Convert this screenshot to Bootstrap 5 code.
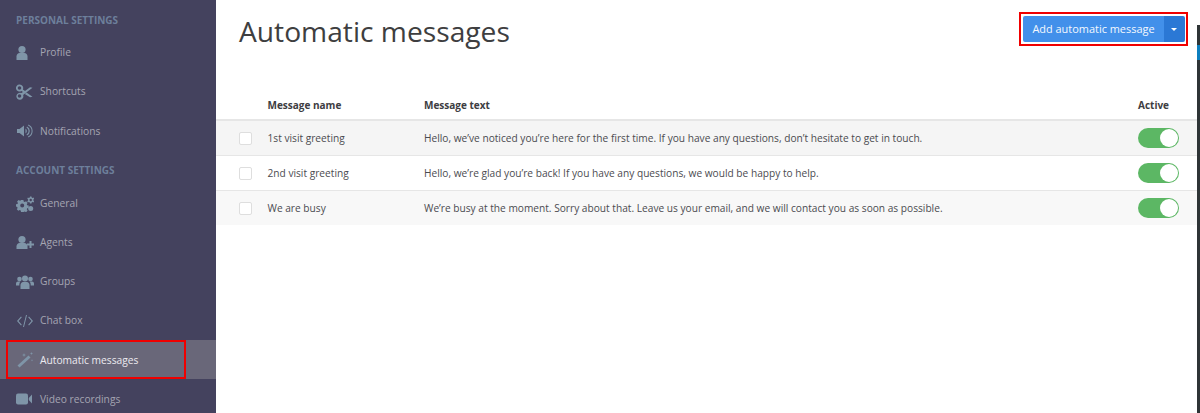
<!DOCTYPE html>
<html lang="en">
<head>
<meta charset="utf-8">
<title>Automatic messages</title>
<link href="https://cdn.jsdelivr.net/npm/bootstrap@5.3.0/dist/css/bootstrap.min.css" rel="stylesheet">
<style>
html,body{height:413px;overflow:hidden;background:#fff}
body{font-family:"Open Sans","Liberation Sans",sans-serif;color:#444;font-size:11px}
.shell{height:413px;overflow:hidden}
.side{width:216px;flex:none;background:#44425e;height:413px;overflow:hidden;padding-top:13px}
.side-head{font-size:10px;font-weight:700;color:#6d7f9b;padding-left:16px;line-height:15px;margin:0}
.side-head.later{margin-top:12.500px}
.side-item{display:flex;align-items:center;height:39.100px;color:#a5a5b2;font-size:10.25px;padding-left:16px;text-decoration:none;position:relative;padding-top:1px}
.side-item svg{width:18px;height:16px;margin-right:6px;flex:none;fill:#7f95a8}
.side-list{margin-top:5px}
.side-list.tight{margin-top:6px}
.side-item.on{background:#696779;color:#eceaf0}
.side-item.on::after{content:"";position:absolute;left:6px;top:0;width:180px;height:39px;border:2px solid #f00000}
.body-pane{flex:1;min-width:0;position:relative}
.top{padding:12px 12px 0 23px;height:96px}
.page-title{font-size:28.2px;font-weight:400;color:#3e3e40;margin:0;line-height:38px}
.add-wrap{border:2px solid #f00000;padding:2px 1.5px 2px 2px;height:34px;display:flex}
.add-main,.add-drop{border:0;background:#4290ea;color:#f4f8fe;font-size:10.95px;height:26px;padding:0}
.add-main{width:141px;border-radius:2px 0 0 2px}
.add-drop{width:20.5px;background:#2b78d5;border-radius:0 2px 2px 0;display:flex;align-items:center;justify-content:center}
.caret-mark{display:block;width:0;height:0;border-left:3.5px solid transparent;border-right:3.5px solid transparent;border-top:3.5px solid #fff}
.tbl-head{display:flex;height:25px;align-items:center;font-weight:700;color:#3d3d42;border-bottom:2px solid #e6e6e6;padding-bottom:4px;font-size:10px}
.tbl-row{display:flex;height:35px;align-items:center;border-bottom:1px solid #e6e6e6;color:#4b4b50;font-size:10.17px}
.tbl-row .c-name,.tbl-row .c-text{padding-top:1px}
.tbl-row.shade{background:#f5f5f5}
.tbl-row.shade2{background:#f8f8f8;border-bottom:0;height:34px}
.c-check{width:51.5px;flex:none;padding-left:23px}
.c-name{width:156.500px;flex:none}
.c-text{flex:1;min-width:0;white-space:nowrap}
.c-act{width:62px;flex:none}
.tick{display:block;width:13px;height:13px;background:#fff;border:1px solid #dedede;border-radius:2px}
.toggle{display:block;width:41px;height:20px;background:#5cb764;border-radius:10px;position:relative}
.toggle::after{content:"";position:absolute;right:1px;top:1px;width:18px;height:18px;border-radius:50%;background:#fff}
.edge{position:absolute;right:0;top:25px;bottom:0;width:3px;background:linear-gradient(#2e3436 0 20px,#0d7fbf 20px 35px,#2e3436 35px)}
</style>
</head>
<body>
<div class="d-flex shell">
  <nav class="side">
    <p class="side-head">PERSONAL SETTINGS</p>
    <div class="side-list">
      <a class="side-item" href="#"><svg viewBox="0 0 18 16"><circle cx="6" cy="4.5" r="3.6"/><path d="M.5 15v-3.500C.5 9.500 2 8 3.500 8h5c1.500 0 3 1.500 3 3.500V15z"/></svg>Profile</a>
      <a class="side-item" href="#"><svg viewBox="0 0 18 16"><path fill-rule="evenodd" d="M3.500.5a3.500 3.500 0 1 0 1.900 6.400L7 8 5.400 9.100a3.500 3.500 0 1 0 1.700 1.800L16.500 3.800l-2.500-.5-5 3.700-2.100-1.600A3.500 3.500 0 0 0 3.500.5zm0 1.700a1.800 1.800 0 1 1 0 3.600 1.800 1.800 0 0 1 0-3.600zm0 8a1.800 1.800 0 1 1 0 3.600 1.800 1.800 0 0 1 0-3.600z"/><path d="M10.500 8.600 8.800 9.900l5.200 3.400 2.500-.5z"/></svg>Shortcuts</a>
      <a class="side-item" href="#"><svg viewBox="0 0 18 16"><path d="M1 6h2.500L8 2.500v11L3.500 10H1z"/><path d="M9.500 5.500a3 3 0 0 1 0 5zM11 3.500a5 5 0 0 1 0 9l-.5-1a4 4 0 0 0 0-7zM12.500 1.500a7.200 7.200 0 0 1 0 13l-.5-1a6 6 0 0 0 0-11z"/></svg>Notifications</a>
    </div>
    <p class="side-head later">ACCOUNT SETTINGS</p>
    <div class="side-list tight">
      <a class="side-item" href="#"><svg viewBox="0 0 18 16"><path fill-rule="evenodd" d="M5 4h2.400l.3 1.500 1 .5 1.400-.7 1.500 1.600-.8 1.300.4 1 1.500.4v2.300l-1.500.4-.4 1 .8 1.300-1.500 1.600-1.400-.8-1 .5L7.400 16H5l-.3-1.500-1-.5-1.400.8L.8 13.200l.8-1.300-.4-1L0 10.500V8.300l1.500-.4.4-1-.8-1.300 1.500-1.600 1.400.7 1-.5zM6.200 7.500a2 2 0 1 0 0 4 2 2 0 0 0 0-4z"/><path fill-rule="evenodd" d="M14 .5h1.500l.2 1 1 .5.9-.4.6 1.200-.8.700v1l.8.700-.6 1.200-.9-.4-1 .5-.2 1H14l-.2-1-1-.5-.9.400-.6-1.200.8-.700v-1l-.8-.7.6-1.200.9.400 1-.5zm.7 2.300a1.200 1.200 0 1 0 0 2.400 1.200 1.200 0 0 0 0-2.400z"/><circle cx="14.700" cy="12.500" r="2.500"/></svg>General</a>
      <a class="side-item" href="#"><svg viewBox="0 0 18 16"><circle cx="6" cy="4.500" r="3.600"/><path d="M.5 14v-2.500C.5 9.500 2 8 3.500 8h5c1.500 0 3 1.500 3 3.500V14z"/><path d="M13.500 6h2v2.500H18v2h-2.500V13h-2v-2.500H11v-2h2.500z"/></svg>Agents</a>
      <a class="side-item" href="#"><svg viewBox="0 0 18 16"><circle cx="9" cy="4.500" r="3"/><circle cx="3.500" cy="5" r="2.300"/><circle cx="14.500" cy="5" r="2.300"/><path d="M4.500 15v-4c0-1.500 1.200-3 2.500-3h4c1.300 0 2.500 1.500 2.500 3v4z"/><path d="M0 11.500V9.500C0 8.300 1 7.500 2 7.500h2.500C3.800 8.300 3.300 9.300 3.300 10.500v1zM18 11.500V9.500c0-1.200-1-2-2-2h-2.500c.7.800 1.200 1.800 1.200 3v1z"/></svg>Groups</a>
      <a class="side-item" href="#"><svg viewBox="0 0 18 16"><path d="M5 3.500 1 8l4 4.500.8-.7L2.500 8l3.300-3.800zM13 3.500l4 4.500-4 4.500-.8-.7L15.500 8l-3.300-3.800zM10 2h1L8 14H7z"/></svg>Chat box</a>
      <a class="side-item on" href="#"><svg viewBox="0 0 18 16"><path d="M12.500 3.500 14.500 5.500 3.500 15.500 1.500 13.500z"/><path d="M8 1l.5 1.500L10 3l-1.500.5L8 5l-.5-1.500L6 3l1.500-.5zM15.500 0l.4 1.100L17 1.500l-1.100.4-.4 1.100-.4-1.100L14 1.500l1.100-.4zM16 7l.3.9.9.3-.9.300-.3.9-.3-.9-.9-.3.9-.3z"/></svg>Automatic messages</a>
      <a class="side-item" href="#"><svg viewBox="0 0 18 16"><rect x="0" y="2.500" width="12" height="11" rx="2"/><path d="M12.800 7 16 3.500V12.500L12.800 9z"/></svg>Video recordings</a>
    </div>
  </nav>
  <main class="body-pane">
    <div class="top d-flex justify-content-between align-items-start">
      <h1 class="page-title">Automatic messages</h1>
      <div class="add-wrap">
        <button class="add-main" type="button">Add automatic message</button>
        <button class="add-drop" type="button" aria-label="More"><span class="caret-mark"></span></button>
      </div>
    </div>
    <div class="tbl-head">
      <div class="c-check"></div><div class="c-name">Message name</div><div class="c-text">Message text</div><div class="c-act">Active</div>
    </div>
    <div class="tbl-row shade">
      <div class="c-check"><span class="tick"></span></div><div class="c-name">1st visit greeting</div><div class="c-text">Hello, we’ve noticed you’re here for the first time. If you have any questions, don’t hesitate to get in touch.</div><div class="c-act"><span class="toggle"></span></div>
    </div>
    <div class="tbl-row">
      <div class="c-check"><span class="tick"></span></div><div class="c-name">2nd visit greeting</div><div class="c-text">Hello, we’re glad you’re back! If you have any questions, we would be happy to help.</div><div class="c-act"><span class="toggle"></span></div>
    </div>
    <div class="tbl-row shade2">
      <div class="c-check"><span class="tick"></span></div><div class="c-name">We are busy</div><div class="c-text">We’re busy at the moment. Sorry about that. Leave us your email, and we will contact you as soon as possible.</div><div class="c-act"><span class="toggle"></span></div>
    </div>
    <div class="edge"></div>
  </main>
</div>
<script src="https://cdn.jsdelivr.net/npm/bootstrap@5.3.0/dist/js/bootstrap.bundle.min.js"></script>
</body>
</html>
